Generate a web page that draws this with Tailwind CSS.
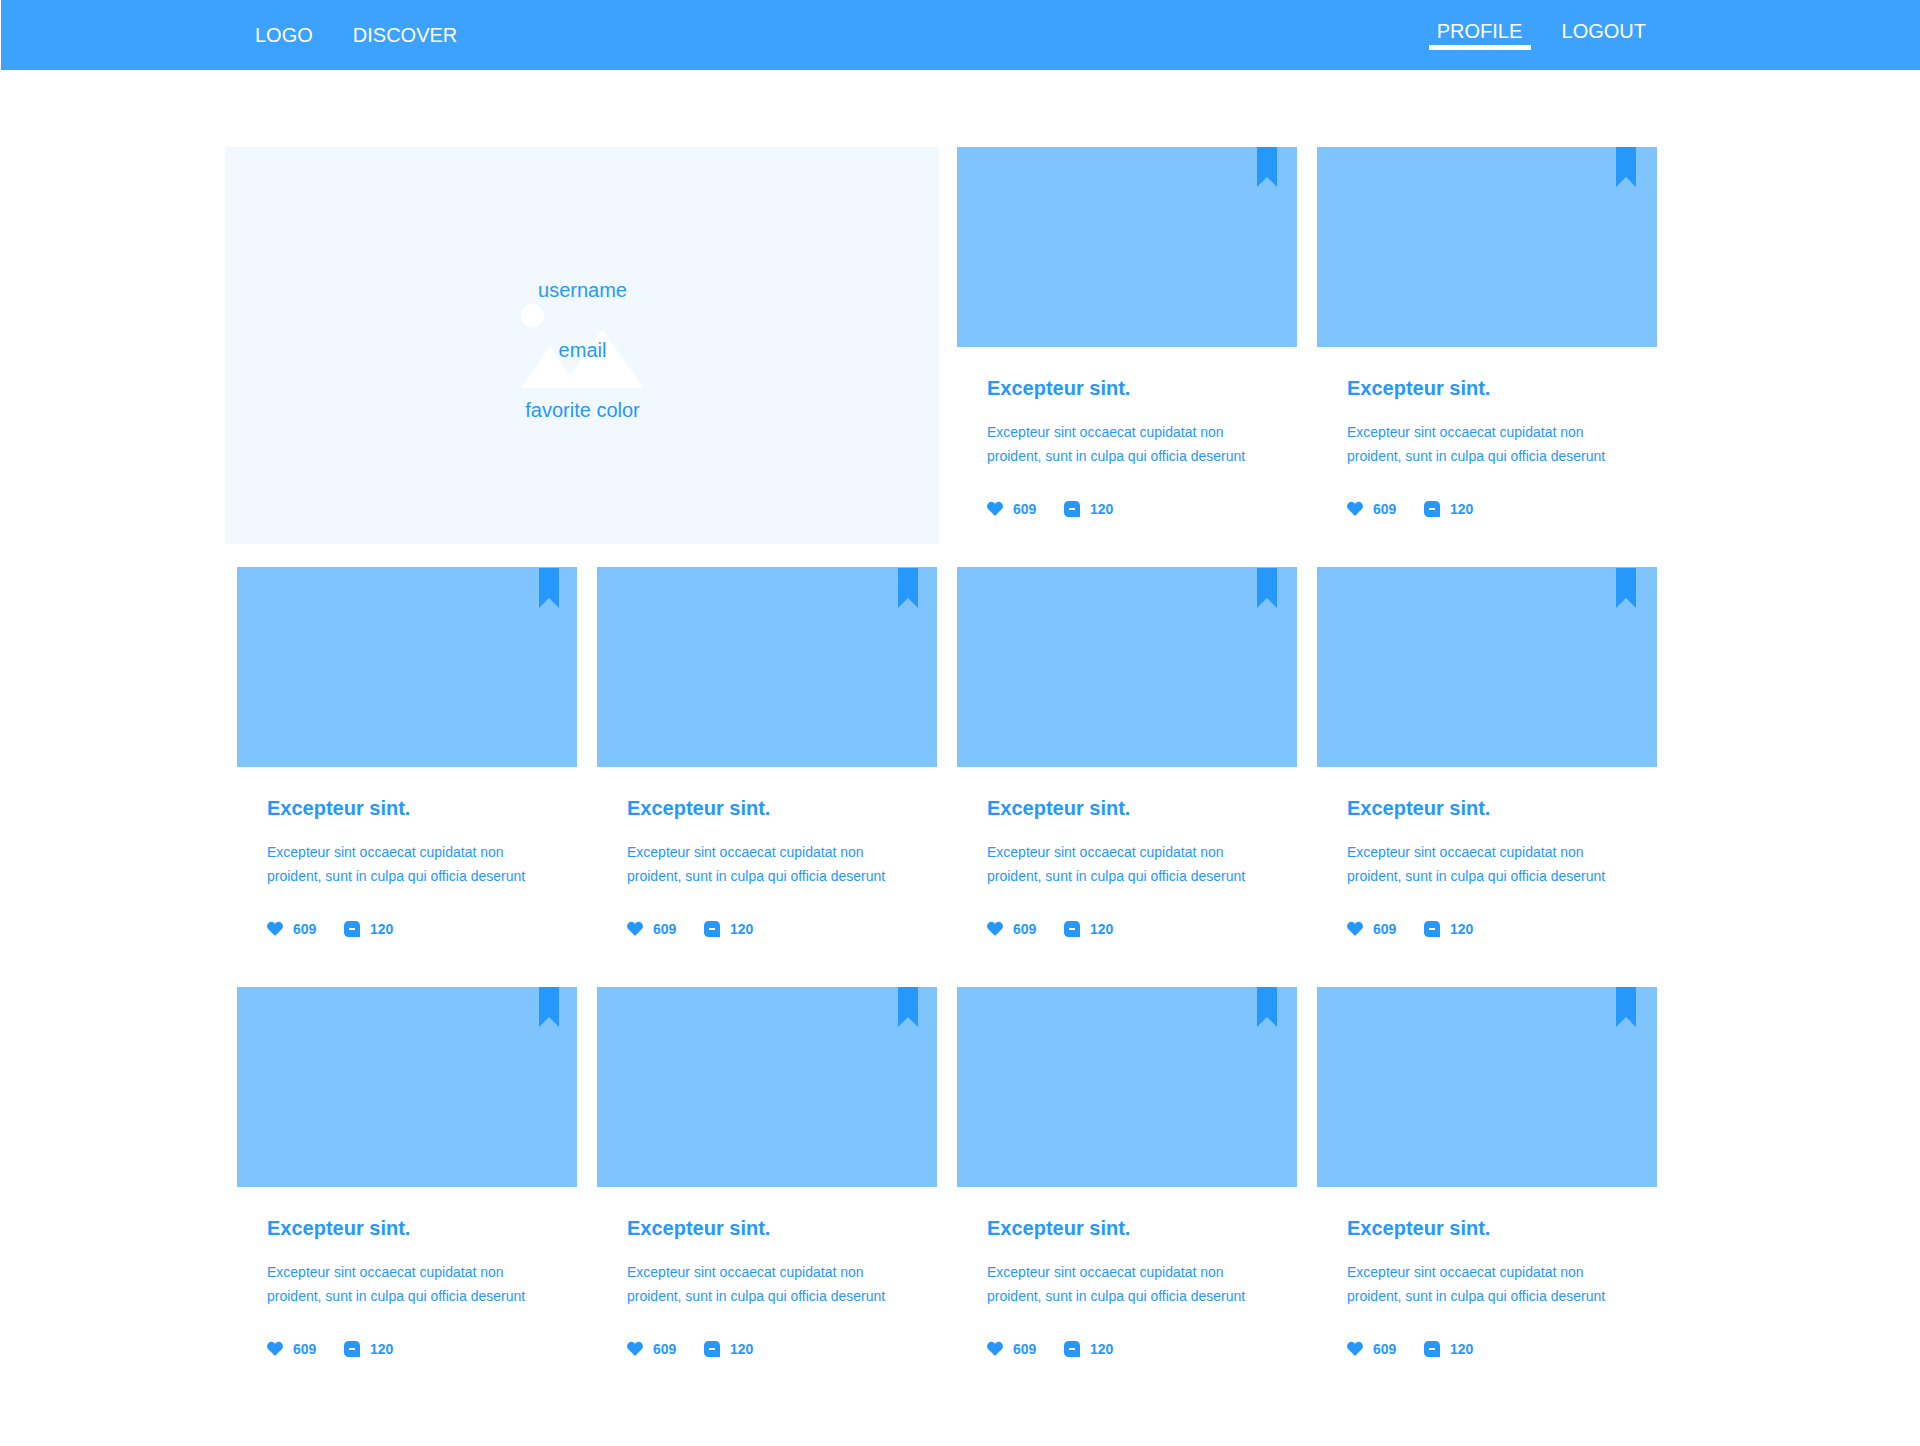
<!DOCTYPE html>
<html lang="en">
<head>
<meta charset="utf-8">
<title>Profile</title>
<script src="https://cdn.jsdelivr.net/npm/@tailwindcss/browser@4"></script>
</head>
<body class="bg-white font-['Liberation_Sans',Arial,sans-serif] text-[#2698fb] w-[1920px] h-[1446px] overflow-hidden">
<header class="ml-px h-[70px] bg-[#3da2fd] text-white text-[20px] leading-6 flex justify-between pl-[254px] pr-[274px]">
  <nav class="flex gap-10 pt-[23px]"><a>LOGO</a><a>DISCOVER</a></nav>
  <nav class="flex gap-[31px] pt-[19px]">
    <a class="w-[102px] h-[31px] text-center border-b-5 border-white">PROFILE</a><a>LOGOUT</a>
  </nav>
</header>
<main id="grid" class="ml-[237px] mt-[77px] grid grid-cols-[repeat(4,340px)] auto-rows-[400px] gap-5">
  <section class="relative col-span-2 -ml-3 -mr-0.5 h-[397px] bg-[#f1f8ff] text-[20px] leading-[60px] text-center pt-[113px] pl-px">
    <svg class="absolute left-[296px] top-[157px]" width="123" height="84" viewBox="0 0 123 84" fill="#fff"><circle cx="11.5" cy="11.5" r="11.6"/><path d="M0 83.7 29 42.3 49.3 71 81.3 25.3 122.5 83.7Z"/></svg>
    <p class="relative">username</p>
    <p class="relative">email</p>
    <p class="relative">favorite color</p>
  </section>
</main>
<template id="card">
  <article>
    <div class="h-[200px] bg-[#7fc4fd] flex justify-end">
      <svg class="bookmark" width="20" height="40" viewBox="0 0 20 40" fill="#2698fb"><path d="M0 0H20V40L10 30 0 40Z"/></svg>
    </div>
    <div class="pt-[29px] pl-[30px]">
      <h2 class="text-[20px] leading-6 font-bold">Excepteur sint.</h2>
      <p class="mt-5 text-[14px] leading-6 whitespace-nowrap">Excepteur sint occaecat cupidatat non<br>proident, sunt in culpa qui officia deserunt</p>
      <div class="mt-[33px] flex items-center text-[14px] leading-4 font-bold">
        <svg width="16" height="16" viewBox="0 0 16 16" fill="#2698fb"><path d="M8 15 1.3 8.3A4.3 4.3 0 0 1 1.3 2.2 4.4 4.4 0 0 1 7.4 2.2L8 2.8 8.6 2.2A4.4 4.4 0 0 1 14.7 2.2 4.3 4.3 0 0 1 14.7 8.3Z"/></svg>
        <span class="ml-[10px] w-[51px]">609</span>
        <svg width="16" height="16" viewBox="0 0 16 16"><path fill="#2698fb" d="M4.5 0H11.5A4.5 4.5 0 0 1 16 4.5V16H4.5A4.5 4.5 0 0 1 0 11.5V4.5A4.5 4.5 0 0 1 4.5 0Z"/><path fill="#fff" d="M5 7H11V9H5Z"/></svg>
        <span class="ml-[10px]">120</span>
      </div>
    </div>
  </article>
</template>
<script>
  const grid = document.getElementById('grid'), card = document.getElementById('card');
  const inset = ['mr-[18px]', 'mr-[19px]', 'mr-[20px]', 'mr-[21px]'];
  for (let i = 2; i < 12; i++) {
    const c = card.content.cloneNode(true);
    c.querySelector('.bookmark').classList.add(inset[i % 4]);
    if (i >= 4 && i < 8) c.querySelector('.bookmark').classList.add('mt-px');
    grid.append(c);
  }
</script>
</body>
</html>
